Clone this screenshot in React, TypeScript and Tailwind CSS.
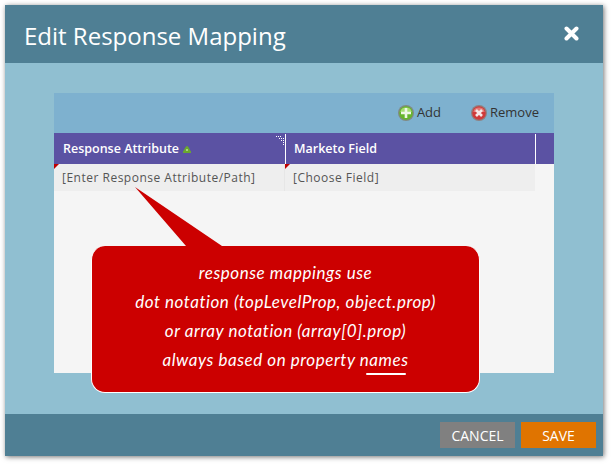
import React from 'react';

function AddIcon() {
  return (
    <svg width="16" height="16" viewBox="0 0 16 16" className="shrink-0">
      <circle cx="8" cy="8" r="8" fill="#808a82" />
      <circle cx="8" cy="8" r="6.8" fill="#66b52c" />
      <path d="M2.300 7a5.800 5.400 0 0 1 11.400 0z" fill="#a5dc72" />
      <path d="M6.700 3h2.600v3.700H13v2.600H9.300V13H6.700V9.300H3V6.700h3.700z" fill="#eef7e6" />
    </svg>
  );
}

function RemoveIcon() {
  return (
    <svg width="16" height="16" viewBox="0 0 16 16" className="shrink-0">
      <circle cx="8" cy="8" r="8" fill="#8f8080" />
      <circle cx="8" cy="8" r="6.8" fill="#cf3a3a" />
      <path d="M2.300 7a5.800 5.400 0 0 1 11.400 0z" fill="#e27a76" />
      <path d="M5 5l6 6M11 5l-6 6" stroke="#f6e6e6" strokeWidth="2.6" />
    </svg>
  );
}

function Corner() {
  return <div className="absolute left-0 top-0 w-0 h-0 border-t-[5px] border-r-[5px] border-t-[#c00000] border-r-transparent" />;
}

function Callout() {
  return (
    <>
      <svg width="100" height="64" viewBox="0 0 100 64" className="absolute left-[120px] top-[121px]">
        <polygon points="10,3 97,62 97,64 61,64 61,62" fill="#cc0000" />
      </svg>
      <div className="absolute left-[86px] top-[183px] w-[389px] h-[147px] rounded-[14px] bg-[#cc0000] border border-white border-t-0 flex flex-col items-center pt-[12px] text-white text-[17px] leading-[29px] italic font-['Lato',sans-serif] tracking-[0.55px]">
        <div>response mappings use</div>
        <div>dot notation (topLevelProp, object.prop)</div>
        <div>or array notation (array[0].prop)</div>
        <div className="relative">
          always based on property names
          <div className="absolute right-[3px] bottom-[-1px] w-[40px] h-[2px] bg-white rounded-full" />
        </div>
      </div>
    </>
  );
}

export default function App() {
  return (
    <div className="w-[612px] h-[465px] bg-white pl-[5px] pt-[5px] overflow-hidden font-['Open_Sans',sans-serif]">
      <div className="w-[598px] h-[451px] flex flex-col shadow-[1px_1px_5px_rgba(0,0,0,0.55)]">
        <div className="h-[58px] bg-[#4f7f94] flex items-center justify-between pl-[19px] pr-[24px] shrink-0">
          <h1 className="text-white text-[24px] leading-none pt-[3px]">Edit Response Mapping</h1>
          <svg width="15" height="15" viewBox="0 0 15 15" className="mb-[2px]">
            <path d="M2.500 2.500l10 10M12.500 2.500l-10 10" stroke="#fff" strokeWidth="4" strokeLinecap="round" />
          </svg>
        </div>

        <div className="relative flex-1 bg-[#90bfd1] pt-[30px] pl-[49px]">
          <div className="w-[500px] h-[280px] bg-[#f5f5f5] flex flex-col">
            <div className="h-[40px] bg-[#7eb1cf] flex items-center justify-end pr-[15px] text-[13px] text-[#333]">
              <div className="flex items-center gap-[3px] mr-[30px]">
                <AddIcon />
                <span>Add</span>
              </div>
              <div className="flex items-center gap-[3px]">
                <RemoveIcon />
                <span>Remove</span>
              </div>
            </div>

            <div className="h-[31px] w-full bg-[#5b52a3] flex text-white text-[12.5px] font-semibold">
              <div className="relative w-[232px] border-r border-white flex items-center pl-[9px] mt-[1px]">
                <span>Response Attribute</span>
                <svg width="8" height="7" viewBox="0 0 8 7" className="ml-[4px] mt-[1px]">
                  <path d="M0 7V5.500C1 4.500 2.500 0 4 0s3 4.500 4 5.500V7z" fill="#6aa82e" />
                  <path d="M3 3h2v2H3z" fill="#a8d47a" />
                </svg>
                <svg width="9" height="9" viewBox="0 0 9 9" className="absolute right-0 top-[2px]">
                  <path d="M0 .5h1M2 .5h1M4 .5h1M3 2.500h1M5 2.500h1M7 2.500h1M7 4.500h1M5 4.500h1M7 6.500h1M7 8.500h1" stroke="#fff" strokeWidth="1" />
                </svg>
              </div>
              <div className="w-[250px] border-r border-white flex items-center pl-[8px] mt-[1px]">
                Marketo Field
              </div>
            </div>

            <div className="h-[27px] w-[481px] bg-[#eeeeee] flex text-[12px] text-[#555] tracking-[0.5px]">
              <div className="relative w-[231px] border-r border-[#e6e6e6] flex items-center pl-[8px]">
                <Corner />
                [Enter Response Attribute/Path]
              </div>
              <div className="relative flex-1 flex items-center pl-[8px]">
                <Corner />
                [Choose Field]
              </div>
            </div>
          </div>
          <Callout />
        </div>

        <div className="h-[42px] bg-[#4f7f94] flex items-center justify-end gap-[6px] pr-[7px] shrink-0 text-white text-[14px]">
          <button className="w-[75px] h-[26px] bg-[#808080] flex items-center justify-center">CANCEL</button>
          <button className="w-[75px] h-[26px] bg-[#e07400] flex items-center justify-center">SAVE</button>
        </div>
      </div>
    </div>
  );
}
